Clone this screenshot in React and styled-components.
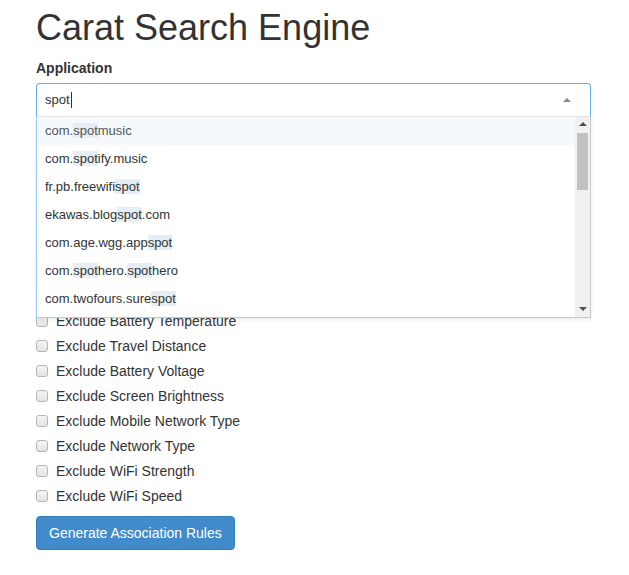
import React from 'react';
import styled, {createGlobalStyle} from 'styled-components';

const GlobalStyle = createGlobalStyle`
  body {
    margin: 0;
    background: #fff;
    font-family: "Liberation Sans", Arial, sans-serif;
    font-size: 14px;
    line-height: 20px;
    color: #333;
  }
`;

const Page = styled.div`
  width: 555px;
  margin-left: 36px;
`;

const Title = styled.h1`
  font-size: 36px;
  font-weight: 500;
  line-height: 1.1;
  margin: 8px 0 10px;
`;

const Label = styled.label`
  display: block;
  font-weight: 700;
  margin-bottom: 5px;
`;

const Select = styled.div`
  position: relative;
`;

const Selection = styled.div`
  box-sizing: border-box;
  height: 34px;
  border: 1px solid #66afe9;
  border-bottom-color: #e6e6e6;
  border-radius: 4px 4px 0 0;
  display: flex;
  align-items: center;
  padding: 0 8px;
  font-size: 13px;
  color: #333;
`;

const Caret = styled.span`
  display: inline-block;
  width: 1px;
  height: 16px;
  background: #333;
  margin-left: 1px;
`;

const Arrow = styled.span`
  margin-left: auto;
  margin-right: 11px;
  width: 0;
  height: 0;
  border-left: 4px solid transparent;
  border-right: 4px solid transparent;
  border-bottom: 4px solid #888;
`;

const Dropdown = styled.div`
  position: absolute;
  top: 34px;
  left: 0;
  right: 0;
  display: flex;
  background: #fff;
  border: 1px solid #c8c8c8;
  border-top: none;
  border-left-color: #9cc8ec;
  box-shadow: 0 2px 4px rgba(0, 0, 0, 0.08);
  z-index: 10;
`;

const Results = styled.ul`
  flex: 1;
  list-style: none;
  margin: 0;
  padding: 0;
  height: 200px;
  overflow: hidden;
`;

const ScrollBar = styled.div`
  width: 15px;
  height: 200px;
  display: flex;
  flex-direction: column;
  background: #f1f1f1;
`;

const ScrollButton = styled.div`
  height: 15px;
  display: flex;
  align-items: center;
  justify-content: center;

  &::after {
    content: '';
    border-left: 4px solid transparent;
    border-right: 4px solid transparent;
    ${p => (p.$down ? 'border-top: 4px solid #505050;' : 'border-bottom: 4px solid #505050;')}
  }
`;

const Track = styled.div`
  flex: 1;
  padding: 1px 2px 0;
`;

const Thumb = styled.div`
  height: 57px;
  background: #c1c1c1;
`;

const Option = styled.li`
  padding: 6px 8px;
  font-size: 13px;
  line-height: 16px;
  white-space: nowrap;
  color: ${p => (p.$active ? '#555' : '#333')};
  background: ${p => (p.$active ? '#f5f9fc' : '#fff')};
`;

const Mark = styled.span`
  background: #e5edf6;
`;

const Checks = styled.div`
  display: flex;
  flex-direction: column;
  gap: 5px;
  margin-top: 19px;
`;

const CheckRow = styled.label`
  display: flex;
  align-items: center;
  height: 20px;
  cursor: pointer;
`;

const Box = styled.input`
  appearance: none;
  box-sizing: border-box;
  width: 12px;
  height: 12px;
  margin: 0 8px 0 0;
  border: 1px solid #b5b5b5;
  border-radius: 3px;
  background: linear-gradient(#f4f4f4, #e4e4e4);
`;

const Button = styled.button`
  margin-top: 10px;
  height: 34px;
  padding: 6px 12px;
  font-family: inherit;
  font-size: 14px;
  line-height: 20px;
  color: #fff;
  background: #428bca;
  border: 1px solid #357ebd;
  border-radius: 4px;
`;

const apps = [
  'com.spotmusic',
  'com.spotify.music',
  'fr.pb.freewifispot',
  'ekawas.blogspot.com',
  'com.age.wgg.appspot',
  'com.spothero.spothero',
  'com.twofours.surespot',
  'com.spotme.android',
];

const excludes = [
  'Exclude CPU Usage',
  'Exclude Battery Health',
  'Exclude Battery Level',
  'Exclude Mobile Data Status',
  'Exclude Roaming',
  'Exclude Charging State',
  'Exclude Memory Usage',
  'Exclude Battery Temperature',
  'Exclude Travel Distance',
  'Exclude Battery Voltage',
  'Exclude Screen Brightness',
  'Exclude Mobile Network Type',
  'Exclude Network Type',
  'Exclude WiFi Strength',
  'Exclude WiFi Speed',
];

function highlight(name) {
  return name.split(/(spot)/).map((part, i) =>
    part === 'spot' ? <Mark key={i}>{part}</Mark> : <React.Fragment key={i}>{part}</React.Fragment>
  );
}

export default function App() {
  return (
    <Page>
      <GlobalStyle/>
      <Title>Carat Search Engine</Title>
      <Label>Application</Label>
      <Select>
        <Selection>
          spot<Caret/>
          <Arrow/>
        </Selection>
        <Dropdown>
          <Results>
            {apps.map((a, i) => (
              <Option key={a} $active={i === 0}>{highlight(a)}</Option>
            ))}
          </Results>
          <ScrollBar>
            <ScrollButton/>
            <Track><Thumb/></Track>
            <ScrollButton $down/>
          </ScrollBar>
        </Dropdown>
      </Select>
      <Checks>
        {excludes.map(e => (
          <CheckRow key={e}>
            <Box type="checkbox"/>
            {e}
          </CheckRow>
        ))}
      </Checks>
      <Button>Generate Association Rules</Button>
    </Page>
  );
}
